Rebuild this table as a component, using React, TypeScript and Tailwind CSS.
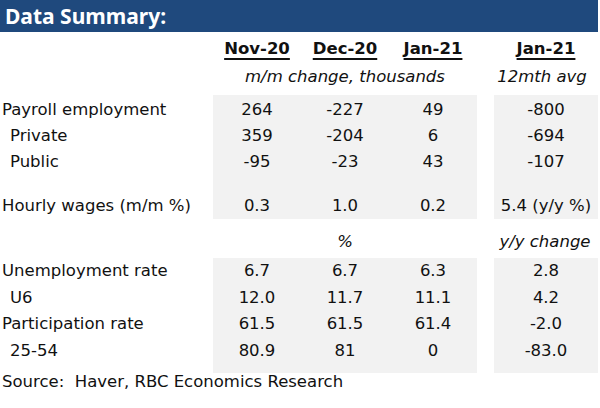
import React from 'react'

const font = { fontFamily: '"DejaVu Sans", "Noto Sans", sans-serif' }
const titleFont = { fontFamily: '"Noto Sans", "DejaVu Sans", sans-serif' }

type Row = { label: string; sub?: boolean; vals: string[]; avg: string }

const groupA: (Row | null)[] = [
  { label: 'Payroll employment', vals: ['264', '-227', '49'], avg: '-800' },
  { label: 'Private', sub: true, vals: ['359', '-204', '6'], avg: '-694' },
  { label: 'Public', sub: true, vals: ['-95', '-23', '43'], avg: '-107' },
  null,
  { label: 'Hourly wages (m/m %)', vals: ['0.3', '1.0', '0.2'], avg: '5.4 (y/y %)' },
]

const groupB: Row[] = [
  { label: 'Unemployment rate', vals: ['6.7', '6.7', '6.3'], avg: '2.8' },
  { label: 'U6', sub: true, vals: ['12.0', '11.7', '11.1'], avg: '4.2' },
  { label: 'Participation rate', vals: ['61.5', '61.5', '61.4'], avg: '-2.0' },
  { label: '25-54', sub: true, vals: ['80.9', '81', '0'], avg: '-83.0' },
]

function DataRow({ row, h }: { row: Row | null; h: string }) {
  if (!row) {
    return (
      <div className={`flex ${h}`}>
        <div className="w-[213px]" />
        <div className="w-[264px] bg-[#f2f2f2]" />
        <div className="w-[17px]" />
        <div className="w-[104px] bg-[#f2f2f2]" />
      </div>
    )
  }
  return (
    <div className={`flex items-stretch ${h}`}>
      <div className={`w-[213px] flex items-center whitespace-nowrap ${row.sub ? 'pl-[10px]' : 'pl-[2px]'}`}>{row.label}</div>
      <div className="w-[264px] bg-[#f2f2f2] grid grid-cols-3">
        {row.vals.map((v, i) => (
          <div key={i} className="flex items-center justify-center">{v}</div>
        ))}
      </div>
      <div className="w-[17px]" />
      <div className="w-[104px] bg-[#f2f2f2] flex items-center justify-center whitespace-nowrap">{row.avg}</div>
    </div>
  )
}

export default function App() {
  return (
    <div className="w-[600px] h-[408px] bg-white text-[#111] text-[16.5px] leading-none overflow-hidden" style={font}>
      {/* Title bar */}
      <div className="h-[32px] w-[598px] bg-[#1f497d] flex items-center pl-[5px]">
        <span className="text-white font-bold text-[21px]" style={titleFont}>Data Summary:</span>
      </div>

      {/* Column headers */}
      <div className="flex h-[34px] items-center">
        <div className="w-[213px]" />
        <div className="w-[264px] grid grid-cols-3 font-bold">
          {['Nov-20', 'Dec-20', 'Jan-21'].map((m) => (
            <div key={m} className="text-center">
              <span className="underline decoration-[1.5px] underline-offset-[4px]">{m}</span>
            </div>
          ))}
        </div>
        <div className="w-[17px]" />
        <div className="w-[104px] text-center font-bold">
          <span className="underline decoration-[1.5px] underline-offset-[4px]">Jan-21</span>
        </div>
      </div>

      <div className="flex h-[29px] items-start pt-[3px] italic">
        <div className="w-[213px]" />
        <div className="w-[264px] text-center whitespace-nowrap">m/m change, thousands</div>
        <div className="w-[17px]" />
        <div className="w-[104px] text-center pr-[8px] whitespace-nowrap">12mth avg</div>
      </div>

      {/* Group A */}
      <div className="flex flex-col">
        <DataRow row={null} h="h-[2px]" />
        {groupA.map((r, i) => (
          <DataRow key={i} row={r} h={r ? 'h-[26px]' : 'h-[18px]'} />
        ))}
      </div>

      <div className="flex h-[39px] items-end pb-[8px] italic">
        <div className="w-[213px]" />
        <div className="w-[264px] text-center">%</div>
        <div className="w-[17px]" />
        <div className="w-[104px] text-center pr-[2px] whitespace-nowrap">y/y change</div>
      </div>

      {/* Group B */}
      <div className="flex flex-col">
        {groupB.map((r, i) => (
          <DataRow key={i} row={r} h="h-[26.7px]" />
        ))}
        <DataRow row={null} h="h-[8px]" />
      </div>

      <div className="h-[18px] flex items-center pl-[2px] whitespace-pre">Source:  Haver, RBC Economics Research</div>
    </div>
  )
}
